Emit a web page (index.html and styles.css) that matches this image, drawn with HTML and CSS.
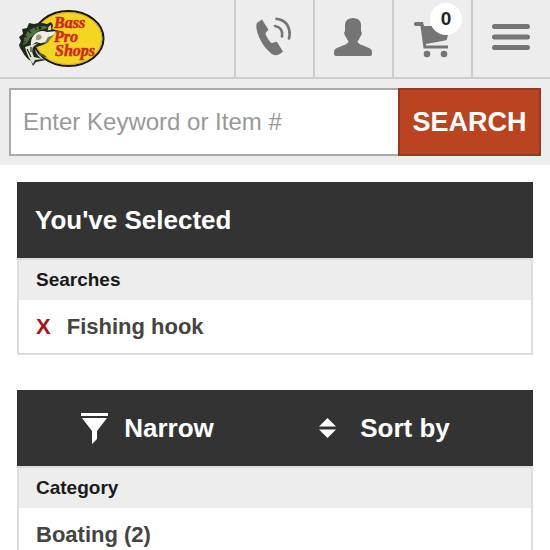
FILE: index.html
```
<!DOCTYPE html>
<html lang="en">
<head>
    <meta charset="UTF-8">
    <meta name="viewport" content="width=device-width, initial-scale=1.0">
    <title>Fishing hook | Bass Pro Shops</title>
    <link rel="stylesheet" href="styles.css">
</head>
<body>
    <header class="site-header">
        <div class="top-bar">
            <a href="#" class="logo" aria-label="Bass Pro Shops home">
                <svg width="88" height="60" viewBox="18 9 88 60">
                    <ellipse cx="68.5" cy="38.5" rx="35" ry="27.5" fill="#f4d51f" stroke="#17170f" stroke-width="2"/>
                    <ellipse cx="68.5" cy="38.5" rx="33.4" ry="26" fill="none" stroke="#d8a51c" stroke-width="1"/>
                    <!-- fish: back, gills, open mouth, belly, tail -->
                    <path d="M19 45L21 41L19 37L23 34L22 29L27 28L29 23L34 24Q41 22 47 24L51 22L53 25L52 29L59 31L51 35Q50 42 45 44Q38 47 36 47C34 50 37 56 42 59L46 60L36 62L33 66L31 61C25 58 23 52 20 48Z" fill="#1e2b1a"/>
                    <path d="M23 45L25 36L28 31L35 27L45 26L48 28L40 30L35 34L30 38L27 43Z" fill="#52703e"/>
                    <path d="M34 35Q40 29 47 32L58 31Q52 34 49 40Q43 45 36 42L31 46Q30 40 34 35Z" fill="#eeeee4"/>
                    <path d="M36 36Q39 32 42 37Q40 41 36 40Z" fill="#92a184"/>
                    <path d="M47 31L48 27L51 24L52 30Z" fill="#d4d2c3" stroke="#171c12" stroke-width="0.8"/>
                    <path d="M25 47L38 43L33 47Q31 51 34 57L43 59L35 60L33 64Q27 56 25 47Z" fill="#dfe3d5"/>
                    <path d="M44 44L48 37L54 35L48 42Z" fill="#837c45"/>
                    <path d="M27 49L31 57M31 47L31 52M22 35L27 37M21 41L26 42M27 29L31 33M34 26L37 30" fill="none" stroke="#17220f" stroke-width="1.1"/>
                    <path d="M37 53Q41 58 47 57L43 54Z" fill="#4b5432"/>
                    <circle cx="40" cy="28" r="1.3" fill="#11160d"/>
                    <g class="logo-text">
                        <text x="54" y="28">Bass</text>
                        <text x="54" y="42">Pro</text>
                        <text x="55" y="56">Shops</text>
                    </g>
                </svg>
            </a>
            <nav class="top-nav" aria-label="Main">
                <a href="#" class="nav-item" aria-label="Call us">
                    <svg width="38" height="40" viewBox="0 0 38 40">
                        <path d="M7 2.500L1.800 6C-1 15 10 34 19 38C22 39 25 37 28 34.500L22 25C20.500 24 18 26.500 16.500 26C14 24 10.500 18 10.500 16.500C10.500 14.500 14 14 13 12Z" fill="#757575"/>
                        <path d="M20 9C25.500 10 28 14 27 19.500M21.500 1.800C31 2.500 36.500 11 34 21.500" fill="none" stroke="#757575" stroke-width="2.700" stroke-linecap="round"/>
                    </svg>
                </a>
                <a href="#" class="nav-item" aria-label="My account">
                    <svg width="38" height="38" viewBox="0 0 38 38">
                        <path d="M11 6Q12 0 19 0T27 6V13Q28.500 14 27.500 16.500Q27 18 26 19Q25 22 23.500 23Q24 26 28 27L35 30Q38 31 38 34V36Q38 38 36 38H2Q0 38 0 36V34Q0 31 3 30L10 27Q14 26 14.500 23Q13 22 12 19Q11 18 10.500 16.500Q9.500 14 11 13Z" fill="#757575"/>
                    </svg>
                </a>
                <a href="#" class="nav-item cart" aria-label="Cart">
                    <svg width="36" height="36" viewBox="0 0 36 36">
                        <path d="M1.500 0H9L10 4H36L33 17Q33 18 31 18.500L12 22V23.500H34V26.500H9.500L6.500 4H1.500Q0 4 0 2T1.500 0Z" fill="#757575"/>
                        <circle cx="13" cy="32" r="3.300" fill="#757575"/>
                        <circle cx="30" cy="32" r="3.300" fill="#757575"/>
                    </svg>
                    <span class="cart-count">0</span>
                </a>
                <button type="button" class="nav-item" aria-label="Menu">
                    <svg width="38" height="26" viewBox="0 0 38 26">
                        <path d="M2.500 2.500H35.500M2.500 13H35.500M2.500 23.500H35.500" stroke="#757575" stroke-width="5" stroke-linecap="round"/>
                    </svg>
                </button>
            </nav>
        </div>
        <form class="search-form" action="#">
            <input type="text" class="search-input" placeholder="Enter Keyword or Item #" aria-label="Enter Keyword or Item #">
            <button type="submit" class="search-btn">SEARCH</button>
        </form>
    </header>

    <main>
        <section class="panel">
            <h2 class="panel-title">You've Selected</h2>
            <div class="panel-body">
                <h3 class="group-title">Searches</h3>
                <div class="row">
                    <button type="button" class="remove-btn" aria-label="Remove Fishing hook">X</button>
                    <span>Fishing hook</span>
                </div>
            </div>
        </section>

        <section class="panel">
            <div class="toolbar">
                <button type="button" class="tool-btn filter-btn">
                    <svg width="27" height="31" viewBox="0 0 27 31">
                        <path d="M0 0H27V3H0ZM1 5H26L16 18V26L11 31V18Z" fill="#fff"/>
                    </svg>
                    Narrow
                </button>
                <button type="button" class="tool-btn sort-btn">
                    <svg width="17" height="20" viewBox="0 0 17 20">
                        <path d="M8.500 0L17 8.500H0ZM0 11.500H17L8.500 20Z" fill="#fff"/>
                    </svg>
                    Sort by
                </button>
            </div>
            <div class="panel-body">
                <h3 class="group-title">Category</h3>
                <a href="#" class="row">Boating (2)</a>
            </div>
        </section>
    </main>
</body>
</html>
```
FILE: styles.css
```
* {
    margin: 0;
    padding: 0;
    box-sizing: border-box;
}

body {
    font-family: "Liberation Sans", Arial, sans-serif;
    background: #fff;
    color: #444;
}

a {
    color: inherit;
    text-decoration: none;
}

button {
    font-family: inherit;
    border: none;
    background: none;
    cursor: pointer;
}

svg {
    display: block;
    flex-shrink: 0;
}

.site-header {
    background: #ededed;
}

.top-bar {
    display: flex;
    justify-content: space-between;
    border-bottom: 2px solid #ccc;
}

.logo {
    padding: 9px 0 0 18px;
}

.logo-text {
    font-family: "Liberation Serif", serif;
    font-size: 16px;
    font-weight: bold;
    font-style: italic;
    fill: #cf2719;
    stroke: #cf2719;
    stroke-width: 0.5;
}

.top-nav {
    display: flex;
}

.nav-item {
    position: relative;
    display: flex;
    justify-content: center;
    align-items: center;
    width: 79px;
    height: 77px;
    padding: 0 2px 4px 0;
    border-left: 2px solid #ccc;
}

.cart {
    padding-top: 6px;
}

.cart-count {
    position: absolute;
    top: 3px;
    right: 9px;
    width: 32px;
    border-radius: 50%;
    background: #fff;
    color: #222;
    font-size: 19px;
    font-weight: bold;
    line-height: 32px;
    text-align: center;
}

.search-form {
    display: flex;
    padding: 9px;
}

.search-input {
    flex: 1;
    min-width: 0;
    height: 68px;
    padding: 0 12px;
    border: 2px solid #aaa;
    border-right: none;
    border-radius: 0;
    background: #fff;
    color: #333;
    font-family: inherit;
    font-size: 24px;
}

.search-input::placeholder {
    color: #999;
    opacity: 1;
}

.search-btn {
    min-width: 143px;
    border: 2px solid #953a22;
    background: #b9441f;
    color: #fff;
    font-size: 27px;
    font-weight: bold;
}

main {
    padding: 17px;
}

.panel {
    margin-bottom: 35px;
}

.panel-title,
.toolbar {
    height: 76px;
    background: #333;
    color: #fff;
    font-size: 26px;
    line-height: 76px;
}

.panel-title {
    padding: 0 18px;
}

.panel-body {
    border: 2px solid #ddd;
}

.group-title {
    padding: 0 17px;
    background: #ededed;
    color: #1a1a1a;
    font-size: 19px;
    line-height: 40px;
}

.row {
    display: flex;
    align-items: center;
    gap: 16px;
    padding: 0 17px;
    font-size: 22px;
    font-weight: bold;
    line-height: 53px;
}

.remove-btn {
    color: #b01116;
    font-size: 22px;
    font-weight: bold;
}

.toolbar {
    display: flex;
    padding-right: 18px;
}

.tool-btn {
    flex: 1;
    display: flex;
    justify-content: center;
    align-items: center;
    gap: 16px;
    color: #fff;
    font-size: 26px;
    font-weight: bold;
}

.filter-btn {
    padding-left: 12px;
}

.sort-btn {
    gap: 24px;
    padding-right: 12px;
}
```
